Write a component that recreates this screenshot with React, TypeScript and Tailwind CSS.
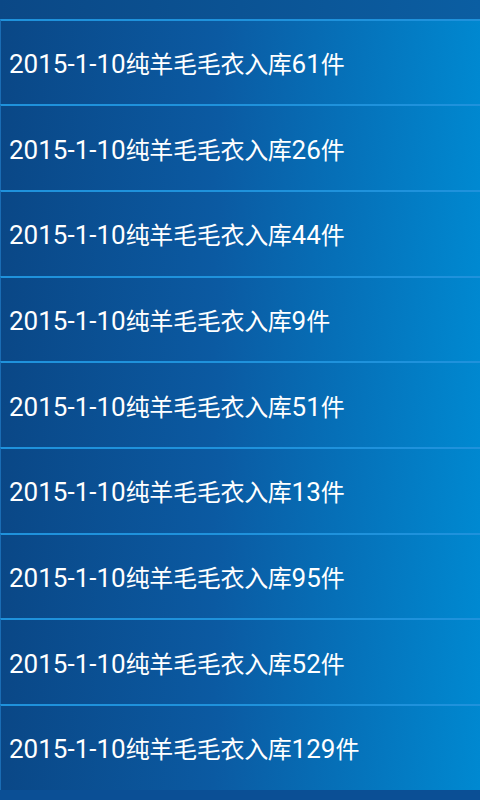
const counts = [61, 26, 44, 9, 51, 13, 95, 52, 129];

export default function App() {
  return (
    <div className="w-[480px] h-[800px] overflow-hidden bg-[#0b4f95] font-['Roboto','Noto_Sans_CJK_SC',sans-serif] text-white">
      {/* top of the previous row, scrolled off */}
      <div className="h-[18.5px] bg-[linear-gradient(90deg,#0b4886,#0b5ea2)]" />

      {counts.map((n, i) => (
        <div
          key={i}
          className="h-[85.7px] shrink-0 flex items-center pl-[8px] pt-[3px] border-t-2 border-t-[#1f92dc] border-l border-l-[#1a6cb4] bg-[linear-gradient(95deg,#0a4786,#0b5aa2_45%,#0089d1)]"
        >
          <span className="text-[26px] leading-none whitespace-nowrap">
            2015-1-10
            <span className="text-[24px] tracking-[-0.3px]">纯羊毛毛衣入库</span>
            {n}
            <span className="text-[24px]">件</span>
          </span>
        </div>
      ))}
    </div>
  );
}
